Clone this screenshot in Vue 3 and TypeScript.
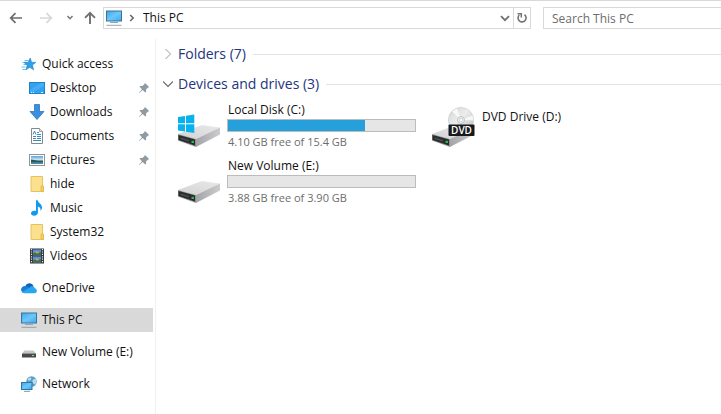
<script setup lang="ts">
import { ref } from 'vue'

interface NavItem {
  label: string
  icon: string
  level: number
  pinned?: boolean
  spaced?: boolean
}

interface Drive {
  label: string
  kind: 'system' | 'disk' | 'dvd'
  used?: number
  detail?: string
}

const nav: NavItem[] = [
  { label: 'Quick access', icon: 'star', level: 0 },
  { label: 'Desktop', icon: 'desktop', level: 1, pinned: true },
  { label: 'Downloads', icon: 'download', level: 1, pinned: true },
  { label: 'Documents', icon: 'document', level: 1, pinned: true },
  { label: 'Pictures', icon: 'picture', level: 1, pinned: true },
  { label: 'hide', icon: 'folder', level: 1 },
  { label: 'Music', icon: 'music', level: 1 },
  { label: 'System32', icon: 'folder', level: 1 },
  { label: 'Videos', icon: 'video', level: 1 },
  { label: 'OneDrive', icon: 'cloud', level: 0, spaced: true },
  { label: 'This PC', icon: 'pc', level: 0, spaced: true },
  { label: 'New Volume (E:)', icon: 'smalldrive', level: 0, spaced: true },
  { label: 'Network', icon: 'network', level: 0, spaced: true },
]

const drives: Drive[] = [
  { label: 'Local Disk (C:)', kind: 'system', used: 73, detail: '4.10 GB free of 15.4 GB' },
  { label: 'DVD Drive (D:)', kind: 'dvd' },
  { label: 'New Volume (E:)', kind: 'disk', used: 0, detail: '3.88 GB free of 3.90 GB' },
]

const current = ref('This PC')
const query = ref('')
</script>

<template>
  <div class="explorer">
    <svg class="defs" width="0" height="0" aria-hidden="true">
      <defs>
        <linearGradient id="g-screen" x1="0" y1="0" x2="1" y2="1">
          <stop offset="0" stop-color="#3aa5ee" /><stop offset="0.5" stop-color="#6cc8fb" /><stop offset="1" stop-color="#3ba9f0" />
        </linearGradient>
        <linearGradient id="g-top" x1="0" y1="1" x2="1" y2="0">
          <stop offset="0" stop-color="#d2d2d4" /><stop offset="1" stop-color="#e9e9ea" />
        </linearGradient>
        <linearGradient id="g-side" x1="0" y1="0" x2="1" y2="0">
          <stop offset="0" stop-color="#a4a5a8" /><stop offset="1" stop-color="#cbccce" />
        </linearGradient>
        <linearGradient id="g-disc" x1="0" y1="0" x2="1" y2="1">
          <stop offset="0" stop-color="#d0d3d3" /><stop offset="0.45" stop-color="#eceeed" /><stop offset="1" stop-color="#b9bdbd" />
        </linearGradient>
        <linearGradient id="g-sky" x1="0" y1="0" x2="0" y2="1">
          <stop offset="0" stop-color="#5aa2dc" /><stop offset="0.5" stop-color="#d3eaf5" /><stop offset="0.6" stop-color="#3b6b78" /><stop offset="1" stop-color="#4a90b8" />
        </linearGradient>
      </defs>
      <symbol id="i-star" viewBox="0 0 16 16">
        <path d="M3.500 4.500h4M1.500 6.500h4M2.500 8.500h3M.5 11h4M1.500 13.500h3" stroke="#6bbcf0" stroke-width="1" />
        <path d="M9.200 2 10.600 6.200l4.200.2-3.400 2.700 1.200 4.700-3.800-2.500-3.900 2.500 1.300-4.500-3.200-2.900 4.300-.2z" fill="#2f9fe8" stroke="#1b80c8" stroke-width=".6" />
      </symbol>
      <symbol id="i-desktop" viewBox="0 0 16 16">
        <rect x=".5" y="2.500" width="15" height="11" fill="#32a2ef" stroke="#1f82c9" />
        <path d="M1 10 12 3h3v3L4 12H1z" fill="#4db2f5" opacity=".7" />
        <path d="M2 12.500h1m1 0h1m7 0h2" stroke="#d6effd" />
      </symbol>
      <symbol id="i-download" viewBox="0 0 16 16">
        <path d="M5.500.5h5v7H15L8 15.500 1 7.500h4.500z" fill="#3c8fdd" stroke="#2b77c0" stroke-width=".8" />
      </symbol>
      <symbol id="i-document" viewBox="0 0 16 16">
        <path d="M2.500.5h8l3 3v12h-11z" fill="#fff" stroke="#85898c" />
        <path d="M10.500.5v3h3" fill="#ddd" stroke="#85898c" stroke-width=".7" />
        <path d="M4 6.500 5.500 3 7 6.500M8 4.500h2M8 6.500h4M8 8.500h4M8 10.500h4M4 12.500h8" fill="none" stroke="#2e8fc4" stroke-width="1" />
        <path d="M4 8.500h3M4 10.500h3" stroke="#737d83" />
      </symbol>
      <symbol id="i-picture" viewBox="0 0 16 16">
        <rect x=".5" y="2.500" width="15" height="11" fill="#fff" stroke="#8f9698" />
        <rect x="2" y="4" width="12" height="8" fill="url(#g-sky)" />
        <path d="M2 7.500 5 8l4 1 5 .2V10H2z" fill="#2c5949" />
      </symbol>
      <symbol id="i-folder" viewBox="0 0 16 16">
        <path d="M2 .5h11.500v9l1 .8v5.200H2z" fill="#fbe08d" stroke="#e8c260" />
        <path d="M12 15.500v-5.200l1.500-1 1 1v5.200z" fill="#f5cf60" stroke="#dfb646" stroke-width=".8" />
      </symbol>
      <symbol id="i-music" viewBox="0 0 16 16">
        <path d="M7 .3h1.700c.3 2.700 4.300 3.700 4.300 7.200 0 1.500-.8 2.700-1.700 3.500.8-2.400-.1-3.700-2.400-4.500v6.300c0 1.700-1.700 2.900-3.700 2.900S2 14.700 2 13.300s1.500-2.600 3.200-2.600c.7 0 1.300.1 1.800.4z" fill="#0e9af0" />
      </symbol>
      <symbol id="i-video" viewBox="0 0 16 16">
        <rect x="1" y=".5" width="14" height="15" fill="#33363b" />
        <path d="M2.500 1v14M13.500 1v14" stroke="#e5e7e8" stroke-width="1.200" stroke-dasharray="1.200 1.200" />
        <rect x="4" y="1.500" width="8" height="6" fill="#5b8fdd" />
        <rect x="4" y="8.500" width="8" height="6" fill="#5b8fdd" />
        <path d="M4 5.500 7 4l2 1 3-1v3.500H4zM4 12.500l3-1.500 2 1 3-1v3.500H4z" fill="#3f7150" />
        <path d="m7 3 3 1.500-1 1L6.500 5zM7 10l3 1.500-1 1L6.500 12z" fill="#dcaa3b" />
      </symbol>
      <symbol id="i-cloud" viewBox="0 0 16 16">
        <path d="M4.500 6C5.500 2.500 11 2 12.400 6L8 11.500H3C-.5 11.500-.5 6.500 4.500 6z" fill="#0c63b8" />
        <path d="M3 6.200c2.200-.8 4.200.2 7 2.500L5 12.800H3.200C-.8 12.500-1 7.300 3 6.200z" fill="#1680d5" />
        <path d="M9 7.500c1.400-2.300 4.200-1.800 4.700.7 3 .5 2.800 4.800-.2 5.100H3.300c-1 0-2-.5-2.500-1.200z" fill="#2ba5ef" />
      </symbol>
      <symbol id="i-pc" viewBox="0 0 16 16">
        <rect x=".5" y="1" width="15" height="10" fill="url(#g-screen)" stroke="#3c7597" />
        <path d="M4 12.500h8" stroke="#8ca6b5" stroke-width="1" />
        <path d="M.5 15.300h15" stroke="#879dab" stroke-width=".9" />
      </symbol>
      <symbol id="i-smalldrive" viewBox="0 0 16 16">
        <path d="M3.500 6.500h9l2.500 3H1z" fill="#c4c5c6" />
        <path d="M1 9.500h14v4H1z" fill="#47494b" />
        <path d="M11 11.500h2" stroke="#7ae4a0" />
      </symbol>
      <symbol id="i-network" viewBox="0 0 16 16">
        <circle cx="10.500" cy="5.500" r="5.200" fill="#5a9ec9" />
        <path d="M7.500 2c2-1.200 3.200-.3 2.700 1.300S8 5 6.500 4zM11.500 4l3-1.500c1.400 2 1 4.500-.5 6L11.500 7z" fill="#b8dcea" />
        <rect x=".5" y="6.500" width="10.500" height="7" fill="url(#g-screen)" stroke="#32759e" />
        <path d="M3 15.300h6" stroke="#7596a8" />
      </symbol>
      <symbol id="i-pin" viewBox="0 0 12 12">
        <path d="m7 1 4.300 4.300-1.300.3-2 2 .2 2-1 1L4.700 8 1 11.300 1 10.700 4 7.300 1.500 4.800l1-.9 2 .1 2-2z" fill="#8f99a1" />
      </symbol>
      <symbol id="i-drive" viewBox="0 0 48 48">
        <path d="M3 32 25.500 23.500Q27 23 28.500 23.200L45 25.500 21 37z" fill="url(#g-top)" />
        <path d="M21 37 45 25.500V32.500L21 45z" fill="url(#g-side)" />
        <path d="M3 32 21 37V45L3 38.500z" fill="#8f9092" />
        <path d="M3.500 33 20 37.500V43.500L3.500 38z" fill="#292b2c" />
        <path d="M5.500 35.500 14 38v1.500L5.500 37z" fill="#4c5050" />
        <path d="M16.500 38.800h2.500v2.200h-2.500z" fill="#2cb84a" />
      </symbol>
    </svg>

    <header class="toolbar">
      <nav class="history" aria-label="History">
        <button class="tool" aria-label="Back">
          <svg width="14" height="12" viewBox="0 0 14 12"><path d="M13 6H2M6.500 1.200 1.700 6l4.800 4.800" fill="none" stroke="#6c6c6c" stroke-width="1.700" /></svg>
        </button>
        <button class="tool" aria-label="Forward" disabled>
          <svg width="14" height="12" viewBox="0 0 14 12"><path d="M1 6h11M7.500 1.200 12.300 6l-4.800 4.800" fill="none" stroke="#d8d8d8" stroke-width="1.700" /></svg>
        </button>
        <button class="tool narrow" aria-label="Recent locations">
          <svg width="8" height="6" viewBox="0 0 8 6"><path d="m1.500 1 2.500 2.700L6.500 1" fill="none" stroke="#777" stroke-width="1.500" /></svg>
        </button>
        <button class="tool" aria-label="Up">
          <svg width="12" height="14" viewBox="0 0 12 14"><path d="M6 13V2M1 6.800 6 1.800l5 5" fill="none" stroke="#707070" stroke-width="1.900" /></svg>
        </button>
      </nav>
      <div class="address">
        <svg class="icon"><use href="#i-pc" /></svg>
        <svg class="crumb" width="6" height="8" viewBox="0 0 6 8"><path d="m1.200 1 3 3-3 3" fill="none" stroke="#666" stroke-width="1.500" /></svg>
        <a class="place" href="#">{{ current }}</a>
        <button class="drop" aria-label="Previous locations">
          <svg width="10" height="7" viewBox="0 0 10 7"><path d="m1 1.200 4 4 4-4" fill="none" stroke="#707070" stroke-width="1.800" /></svg>
        </button>
        <button class="refresh" aria-label="Refresh">
          <svg width="12" height="12" viewBox="0 0 12 12"><path d="M8.500 2.700A4 4 0 1 1 3.300 3" fill="none" stroke="#757575" stroke-width="1.600" /><path d="M1.500 1.800h3.800v3.700" fill="none" stroke="#757575" stroke-width="1.500" /></svg>
        </button>
      </div>
      <input v-model="query" class="search" type="text" placeholder="Search This PC" aria-label="Search This PC" />
    </header>

    <div class="body">
      <nav class="sidebar" aria-label="Locations">
        <a
          v-for="item in nav"
          :key="item.label"
          href="#"
          class="row"
          :class="{ child: item.level === 1, spaced: item.spaced, selected: item.label === current }"
        >
          <svg class="icon"><use :href="`#i-${item.icon}`" /></svg>
          <span class="label">{{ item.label }}</span>
          <svg v-if="item.pinned" class="pin"><use href="#i-pin" /></svg>
        </a>
      </nav>

      <main class="content">
        <h2 class="group">
          <button class="toggle" aria-expanded="false">
            <svg width="10" height="12" viewBox="0 0 10 12"><path d="m2.500 1 5 5-5 5" fill="none" stroke="#999" stroke-width="1" /></svg>
            Folders (7)
          </button>
        </h2>
        <h2 class="group">
          <button class="toggle" aria-expanded="true">
            <svg width="10" height="12" viewBox="0 0 10 12"><path d="m0 3.500 5 5 5-5" fill="none" stroke="#666" stroke-width="1.100" /></svg>
            Devices and drives (3)
          </button>
        </h2>
        <div class="tiles">
          <article v-for="drive in drives" :key="drive.label" class="tile">
            <svg class="drive" viewBox="0 0 48 48">
              <g v-if="drive.kind === 'dvd'">
                <circle cx="32" cy="18" r="12.600" fill="url(#g-disc)" stroke="#c4c8c8" stroke-width=".6" />
                <path d="M32 18 23 9.500A12.600 12.600 0 0 1 28 6.500zM32 18l11.500-4.500a12.600 12.600 0 0 1 .9 5z" fill="#fff" opacity=".75" />
                <circle cx="32" cy="18" r="3.600" fill="#e6e9e9" stroke="#b5baba" stroke-width=".7" />
                <circle cx="32" cy="18" r="1.600" fill="#fff" stroke="#b5baba" stroke-width=".5" />
              </g>
              <use href="#i-drive" />
              <path v-if="drive.kind === 'system'" d="m3 15 7-1v7.300H3zm8-1.200 8.300-1.200v8.700H11zM3 22.300h7v7.300l-7-1zm8 0h8.300v8.600L11 29.700z" fill="#08b2ee" />
              <g v-if="drive.kind === 'dvd'">
                <rect x="19.500" y="22.500" width="26" height="11.500" rx="1" fill="#17191a" />
                <text x="32.500" y="32" text-anchor="middle" class="badge">DVD</text>
              </g>
            </svg>
            <div class="info" :class="{ plain: !drive.detail }">
              <span class="name">{{ drive.label }}</span>
              <template v-if="drive.detail">
                <div class="meter" role="meter" :aria-label="drive.label" aria-valuemin="0" aria-valuemax="100" :aria-valuenow="drive.used">
                  <div class="fill" :style="{ width: `${drive.used}%` }"></div>
                </div>
                <span class="detail">{{ drive.detail }}</span>
              </template>
            </div>
          </article>
        </div>
      </main>
    </div>
  </div>
</template>

<style>
body {
  margin: 0;
  background: #fff;
}
</style>

<style scoped>
.explorer {
  box-sizing: border-box;
  display: flex;
  flex-direction: column;
  min-height: 100vh;
  border-top: 1px solid #d9d9d9;
  background: #fff;
  color: #111;
  font-family: 'Segoe UI', 'Open Sans', 'Noto Sans', sans-serif;
  font-size: 12px;
  line-height: 16px;
}
.defs {
  position: absolute;
}
button {
  display: flex;
  align-items: center;
  justify-content: center;
  padding: 0;
  border: 0;
  background: none;
  color: inherit;
  font: inherit;
}
a {
  color: inherit;
  text-decoration: none;
}
svg {
  flex: none;
}
.icon {
  width: 16px;
  height: 16px;
}

.toolbar {
  display: flex;
  align-items: center;
  padding: 6px 0 0 4px;
}
.history {
  display: flex;
  flex: none;
  width: 99px;
}
.tool {
  width: 24px;
  height: 22px;
  margin-right: 6px;
}
.tool.narrow {
  width: 12px;
  margin-right: 2px;
}
.tool:last-child {
  margin-right: 0;
}
.address {
  box-sizing: border-box;
  display: flex;
  flex: 1;
  align-items: center;
  height: 22px;
  margin-right: 12px;
  padding-left: 2px;
  border: 1px solid #d9d9d9;
}
.crumb {
  margin: 0 8px 0 7px;
}
.place {
  flex: 1;
}
.drop {
  width: 16px;
  height: 20px;
}
.refresh {
  width: 17px;
  height: 20px;
  border-left: 1px solid #d9d9d9;
}
.search {
  box-sizing: border-box;
  flex: 0 1 178px;
  min-width: 0;
  height: 22px;
  padding: 0 8px;
  border: 1px solid #d9d9d9;
  border-right: 0;
  border-radius: 0;
  outline: 0;
  background: #fff;
  color: inherit;
  font: inherit;
}
.search::placeholder {
  color: #6d6d6d;
  opacity: 1;
}

.body {
  display: flex;
  flex: 1;
  padding-top: 10px;
}
.sidebar {
  box-sizing: border-box;
  flex: none;
  width: 156px;
  padding: 13px 2px 0 0;
  border-right: 1px solid #f0f0f0;
}
.row {
  box-sizing: border-box;
  display: flex;
  align-items: center;
  gap: 5px;
  height: 24px;
  padding: 0 3px 0 21px;
}
.row.child {
  padding-left: 29px;
}
.row.spaced {
  margin-top: 8px;
}
.row.selected {
  background: #d9d9d9;
}
.label {
  flex: 1;
  white-space: nowrap;
}
.pin {
  width: 12px;
  height: 12px;
}

.content {
  flex: 1;
  min-width: 0;
  padding-left: 7px;
}
.group {
  display: flex;
  align-items: center;
  gap: 7px;
  height: 30px;
  margin: 0;
  color: #24357c;
  font-size: 14px;
  font-weight: 400;
  line-height: 20px;
}
.group::after {
  flex: 1;
  height: 1px;
  background: #dfe4e6;
  content: '';
}
.toggle {
  gap: 5px;
  white-space: nowrap;
}
.tiles {
  display: grid;
  grid-template-columns: repeat(auto-fill, 254px);
  padding-left: 12px;
}
.tile {
  display: flex;
  gap: 4px;
  height: 56px;
}
.drive {
  width: 48px;
  height: 48px;
  margin-top: 3px;
}
.badge {
  fill: #fff;
  font-size: 10px;
  font-weight: 600;
}
.info {
  display: flex;
  flex-direction: column;
  width: 189px;
  padding-top: 2px;
}
.info.plain {
  padding-top: 9px;
}
.name {
  padding-left: 1px;
  line-height: 17px;
}
.meter {
  box-sizing: border-box;
  height: 13px;
  margin-top: 1px;
  border: 1px solid #bcbcbc;
  background: #e6e6e6;
}
.fill {
  height: 100%;
  background: #26a0da;
}
.detail {
  padding-left: 1px;
  margin-top: 1px;
  color: #6d6d6d;
  font-size: 11px;
  line-height: 17px;
}
</style>
